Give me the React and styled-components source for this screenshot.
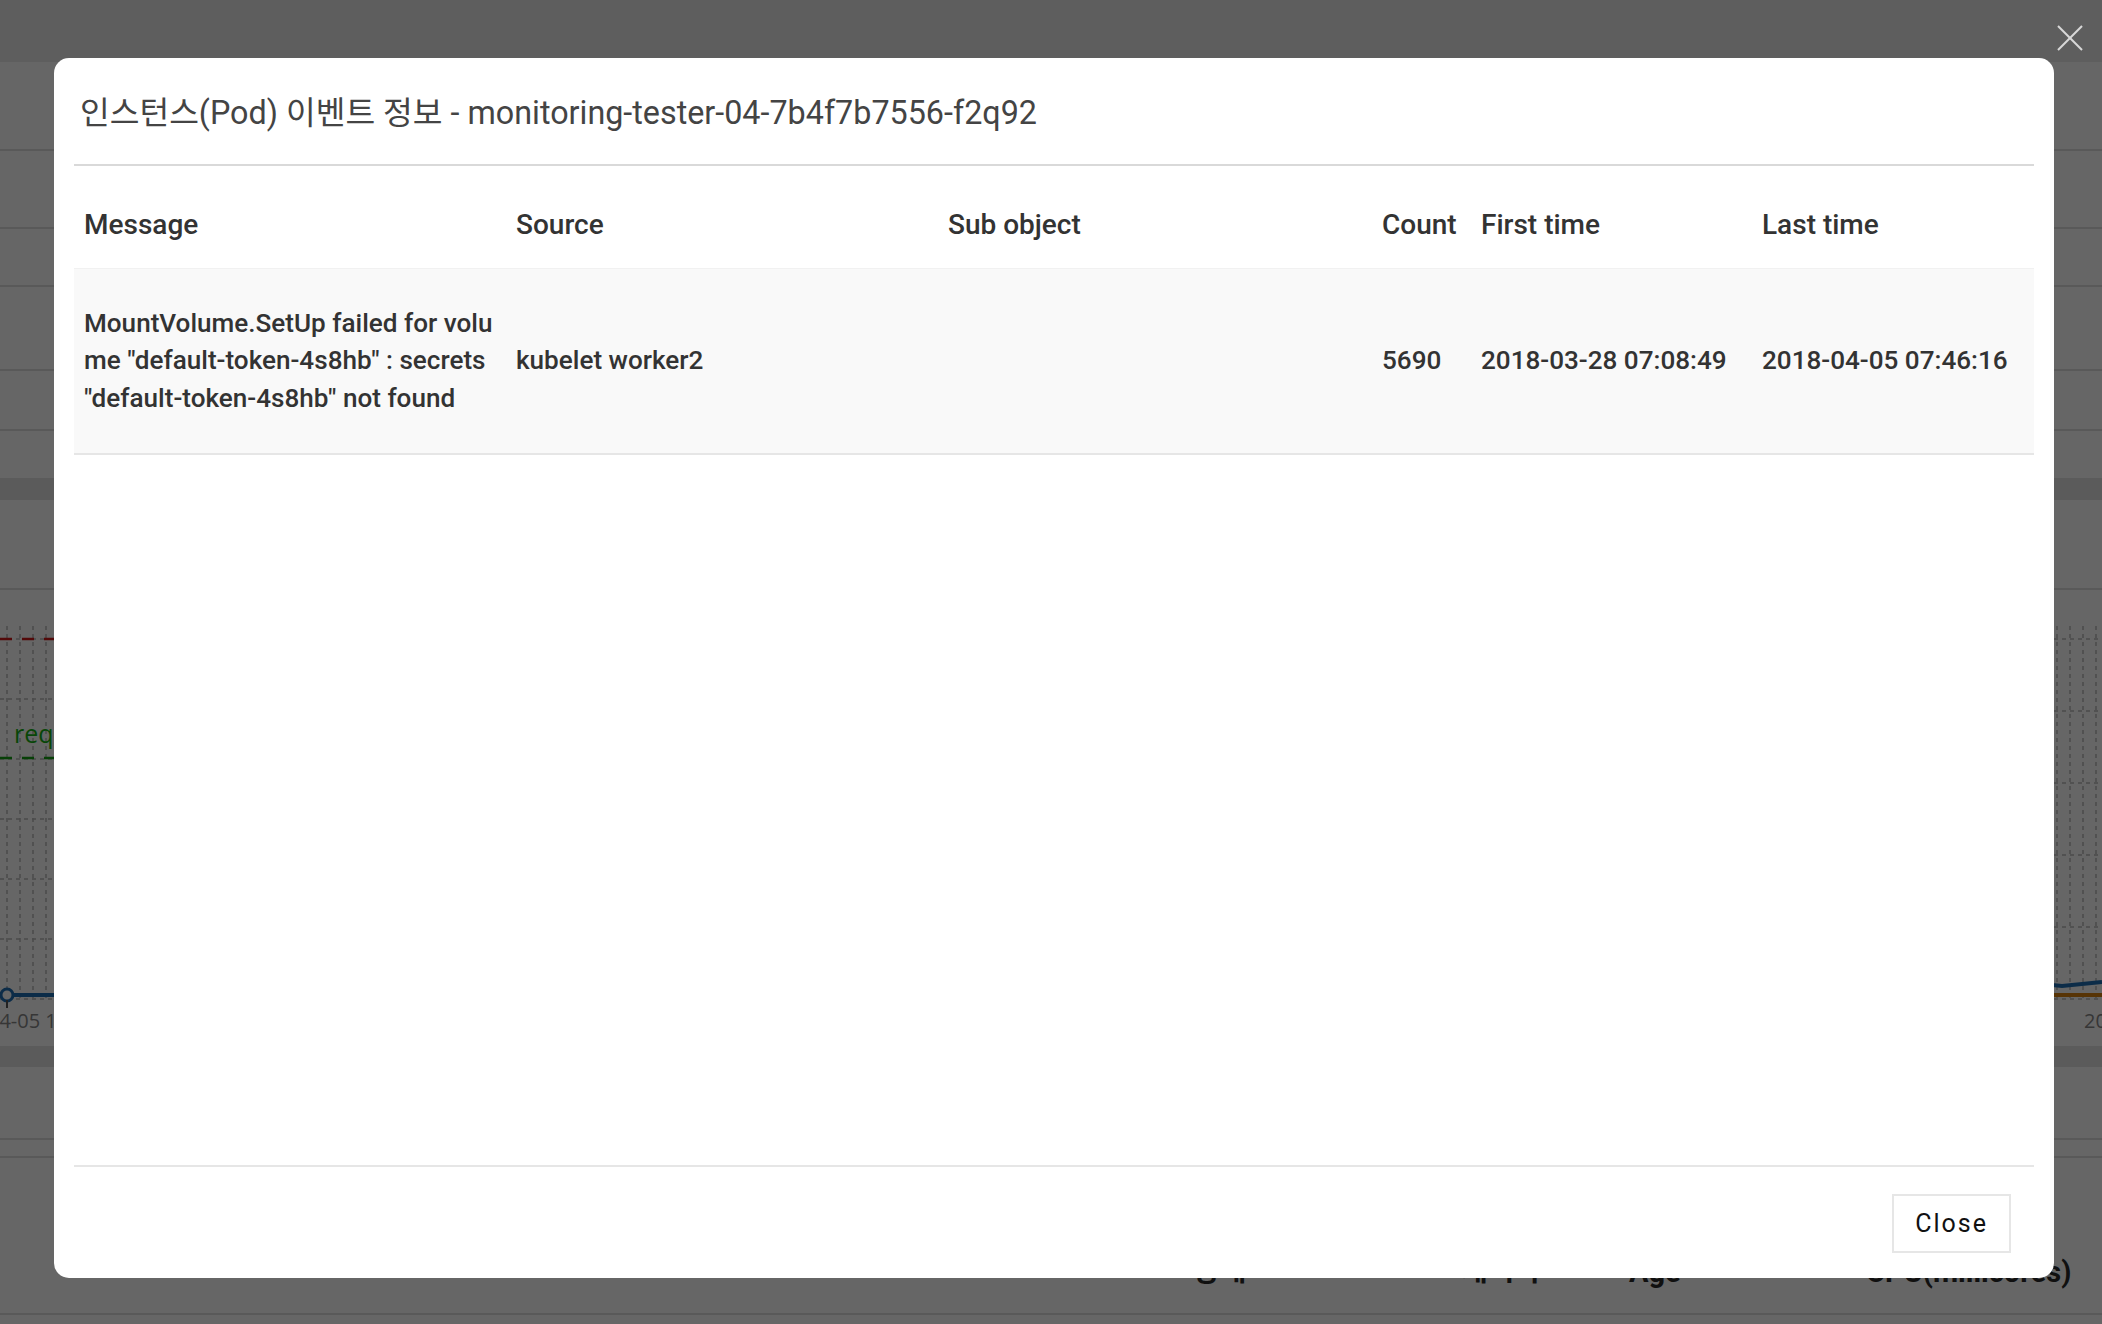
import React from 'react';
import styled, { createGlobalStyle } from 'styled-components';

const GlobalStyle = createGlobalStyle`
    html, body {
        margin: 0;
        padding: 0;
        background: #fff;
    }
    body {
        font-family: Roboto, "Noto Sans CJK KR", sans-serif;
        color: #333;
    }
`;

const events = [
    {
        message: 'MountVolume.SetUp failed for volume "default-token-4s8hb" : secrets "default-token-4s8hb" not found',
        source: 'kubelet worker2',
        subObject: '',
        count: 5690,
        firstTime: '2018-03-28 07:08:49',
        lastTime: '2018-04-05 07:46:16'
    }
];

const columns = [
    { key: 'message', label: 'Message', width: 432 },
    { key: 'source', label: 'Source', width: 432 },
    { key: 'subObject', label: 'Sub object', width: 434 },
    { key: 'count', label: 'Count', width: 99 },
    { key: 'firstTime', label: 'First time', width: 281 },
    { key: 'lastTime', label: 'Last time' }
];

// page behind the dialog, mostly covered by the backdrop
const infoRows = [89, 78, 58, 84, 60];

function Chart({ gridStep, color, showRequest, axisLabel, labelX }) {
    const verticals = [];
    for (let x = 7; x < 1040; x += 13) verticals.push(x);
    const horizontals = [];
    for (let y = 49; y <= 410; y += gridStep) horizontals.push(y);
    return (
        <svg width="100%" height="456" viewBox="0 0 1040 456" preserveAspectRatio="none">
            {verticals.map(x => (
                <line key={x} x1={x} y1="36" x2={x} y2="408" stroke="#bbb" strokeDasharray="4 4" strokeWidth="1.5" />
            ))}
            {horizontals.map(y => (
                <line key={y} x1="0" y1={y} x2="1040" y2={y} stroke="#bbb" strokeDasharray="4 4" strokeWidth="1.5" />
            ))}
            {showRequest && (
                <g>
                    <line x1="0" y1="49" x2="1040" y2="49" stroke="#d01818" strokeDasharray="12 10" strokeWidth="2.5" />
                    <line x1="0" y1="168" x2="1040" y2="168" stroke="#12a012" strokeDasharray="12 10" strokeWidth="2.5" />
                    <text x="14" y="153" fill="#14b014" fontSize="25" fontFamily="'Open Sans', sans-serif">request</text>
                    <polyline points="7,405 300,405 700,404 1040,404" fill="none" stroke={color} strokeWidth="4" />
                    <circle cx="7" cy="405" r="6" fill="#fff" stroke={color} strokeWidth="3" />
                    <line x1="7" y1="410" x2="7" y2="418" stroke="#555" strokeWidth="2" />
                </g>
            )}
            {!showRequest && (
                <g>
                    <polyline points="0,380 900,384 960,392 1000,396 1040,392" fill="none" stroke={color} strokeWidth="4" />
                    <line x1="0" y1="405" x2="1040" y2="405" stroke="#d9820f" strokeWidth="4" />
                </g>
            )}
            <text x={labelX} y="438" fill="#888" fontSize="20" fontFamily="'Open Sans', sans-serif">{axisLabel}</text>
        </svg>
    );
}

export default function App() {
    return (
        <>
            <GlobalStyle />
            <Page>
                <TopBar />
                {infoRows.map((h, i) => (
                    <InfoRow key={i} $height={h} />
                ))}
                <Gap $height={47} />
                <Band $height={22} />
                <PanelTitles>
                    <div />
                    <div />
                </PanelTitles>
                <ChartRow>
                    <ChartCell>
                        <Chart gridStep={60} color="#1f6fb4" showRequest axisLabel="04-05 15:30" labelX={-12} />
                    </ChartCell>
                    <ChartCell>
                        <Chart gridStep={72} color="#1f6fb4" axisLabel="2018-04-05" labelX={1022} />
                    </ChartCell>
                </ChartRow>
                <Band $height={21} />
                <Gap $height={14} />
                <InfoRow $height={59} />
                <InfoRow $height={18} />
                <ListHeader>
                    <span />
                    <span>상태</span>
                    <span>재시작</span>
                    <span>Age</span>
                    <span>CPU(millicores)</span>
                </ListHeader>
            </Page>

            <Backdrop>
                <CloseIcon aria-label="close">
                    <svg width="26" height="26" viewBox="0 0 26 26">
                        <line x1="1" y1="1" x2="25" y2="25" stroke="#d8d8d8" strokeWidth="2" />
                        <line x1="25" y1="1" x2="1" y2="25" stroke="#d8d8d8" strokeWidth="2" />
                    </svg>
                </CloseIcon>

                <Modal>
                    <ModalHeader>
                        <Title>인스턴스(Pod) 이벤트 정보 - monitoring-tester-04-7b4f7b7556-f2q92</Title>
                    </ModalHeader>

                    <ModalBody>
                        <EventTable>
                            <colgroup>
                                {columns.map(c => (
                                    <col key={c.key} style={c.width ? { width: c.width } : undefined} />
                                ))}
                            </colgroup>
                            <thead>
                                <tr>
                                    {columns.map(c => (
                                        <Th key={c.key}>{c.label}</Th>
                                    ))}
                                </tr>
                            </thead>
                            <tbody>
                                {events.map((ev, i) => (
                                    <tr key={i}>
                                        {columns.map(c => (
                                            <Td key={c.key}>{ev[c.key]}</Td>
                                        ))}
                                    </tr>
                                ))}
                            </tbody>
                        </EventTable>
                    </ModalBody>

                    <ModalFooter>
                        <CloseButton type="button">Close</CloseButton>
                    </ModalFooter>
                </Modal>
            </Backdrop>
        </>
    );
}

const Page = styled.div`
    width: 2102px;
    height: 1324px;
    overflow: hidden;
    background: #fff;
`;

const TopBar = styled.div`
    height: 62px;
    background: #ececec;
`;

const InfoRow = styled.div`
    height: ${p => p.$height}px;
    border-bottom: 2px solid #dedede;
    box-sizing: border-box;
`;

const Gap = styled.div`
    height: ${p => p.$height}px;
`;

const Band = styled.div`
    height: ${p => p.$height}px;
    background: #e4e4e4;
`;

const PanelTitles = styled.div`
    display: grid;
    grid-template-columns: 1fr 1fr;
    gap: 22px;
    height: 90px;
    border-bottom: 2px solid #dedede;
    box-sizing: border-box;
`;

const ChartRow = styled.div`
    display: grid;
    grid-template-columns: 1040px 1040px;
    gap: 22px;
    height: 456px;
`;

const ChartCell = styled.div`
    overflow: hidden;
`;

const ListHeader = styled.div`
    display: grid;
    grid-template-columns: 1193px 268px 168px 237px auto;
    align-items: end;
    height: 157px;
    padding-bottom: 24px;
    box-sizing: border-box;
    border-bottom: 2px solid #dedede;
    font-size: 29px;
    font-weight: 700;
    color: #2a2a2a;
`;

const Backdrop = styled.div`
    position: fixed;
    inset: 0;
    background: rgba(0, 0, 0, 0.6);
    padding: 58px 0 0 54px;
    box-sizing: border-box;
`;

const CloseIcon = styled.button`
    position: absolute;
    top: 25px;
    right: 19px;
    width: 26px;
    height: 26px;
    padding: 0;
    border: 0;
    background: transparent;
    display: flex;
`;

const Modal = styled.div`
    width: 2000px;
    height: 1220px;
    background: #fff;
    border-radius: 15px;
    display: flex;
    flex-direction: column;
    box-sizing: border-box;
`;

const ModalHeader = styled.div`
    margin: 0 20px;
    padding: 31px 6px 27px;
    border-bottom: 2px solid #d9d9d9;
`;

const Title = styled.h4`
    margin: 0;
    font-size: 32.3px;
    line-height: 48px;
    font-weight: 400;
    color: #444;
`;

const ModalBody = styled.div`
    flex: 1;
    padding: 14px 20px 0;
`;

const EventTable = styled.table`
    width: 100%;
    border-collapse: collapse;
    table-layout: fixed;
`;

const Th = styled.th`
    padding: 26px 10px 24px;
    font-size: 28px;
    line-height: 37.5px;
    font-weight: 500;
    color: #333;
    text-align: left;
    border-bottom: 1px solid #f1f1f1;
`;

const Td = styled.td`
    padding: 36px 10px;
    font-size: 26.1px;
    line-height: 37.5px;
    font-weight: 500;
    color: #333;
    background: #f9f9f9;
    border-bottom: 2px solid #e6e6e6;
    vertical-align: middle;
    word-break: break-all;
`;

const ModalFooter = styled.div`
    margin: 0 20px;
    padding: 27px 23px 25px 0;
    border-top: 2px solid #e6e6e6;
    display: flex;
    justify-content: flex-end;
`;

const CloseButton = styled.button`
    height: 59px;
    padding: 0 21px;
    background: #fff;
    border: 2px solid #e6e6e6;
    font-family: Roboto, sans-serif;
    font-size: 25px;
    letter-spacing: 2px;
    color: #111;
    cursor: pointer;
`;
